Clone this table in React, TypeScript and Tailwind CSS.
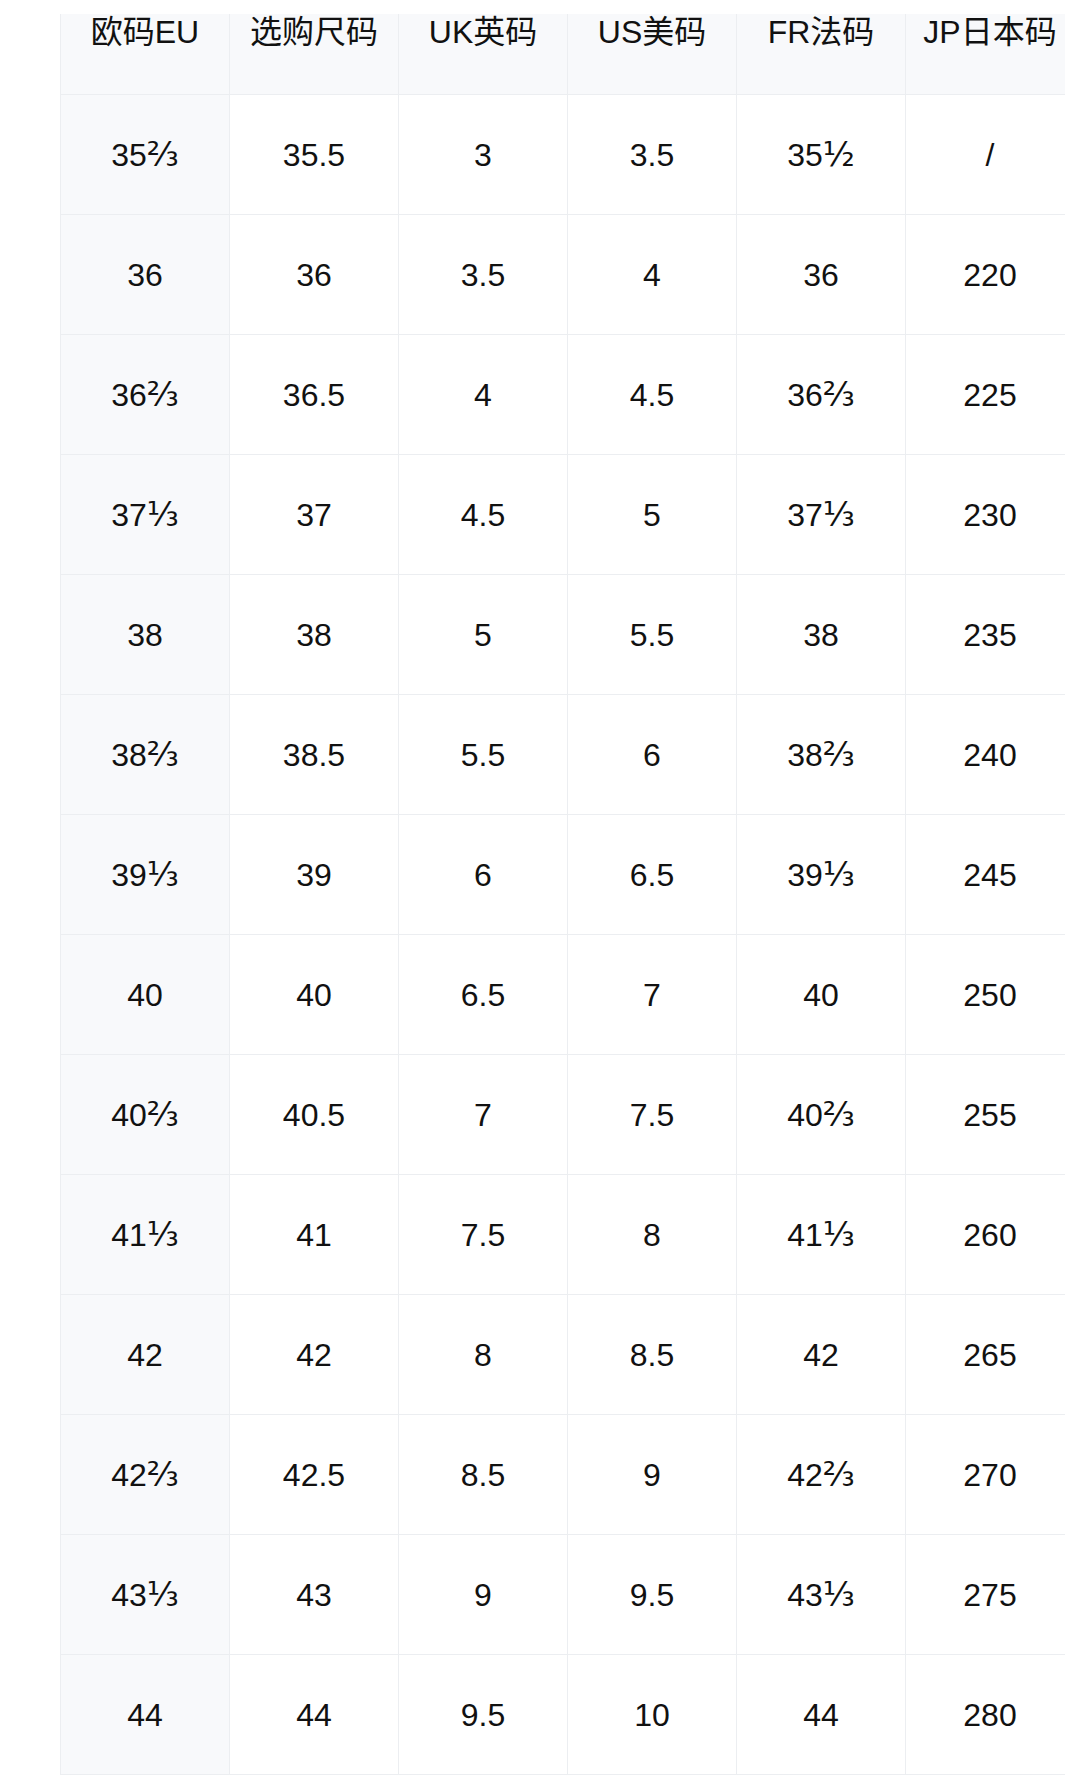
import React from 'react';

const HEADERS = ['欧码EU', '选购尺码', 'UK英码', 'US美码', 'FR法码', 'JP日本码'];

const ROWS = [
  ['35⅔', '35.5', '3', '3.5', '35½', '/'],
  ['36', '36', '3.5', '4', '36', '220'],
  ['36⅔', '36.5', '4', '4.5', '36⅔', '225'],
  ['37⅓', '37', '4.5', '5', '37⅓', '230'],
  ['38', '38', '5', '5.5', '38', '235'],
  ['38⅔', '38.5', '5.5', '6', '38⅔', '240'],
  ['39⅓', '39', '6', '6.5', '39⅓', '245'],
  ['40', '40', '6.5', '7', '40', '250'],
  ['40⅔', '40.5', '7', '7.5', '40⅔', '255'],
  ['41⅓', '41', '7.5', '8', '41⅓', '260'],
  ['42', '42', '8', '8.5', '42', '265'],
  ['42⅔', '42.5', '8.5', '9', '42⅔', '270'],
  ['43⅓', '43', '9', '9.5', '43⅓', '275'],
  ['44', '44', '9.5', '10', '44', '280'],
];

// split a trailing vulgar fraction off so it can use a font with a fuller glyph
function Cell({ value }: { value: string }) {
  const last = value.slice(-1);
  if ('⅓⅔½'.includes(last)) {
    return (
      <span>
        {value.slice(0, -1)}
        <span className="font-['DejaVu_Sans'] text-[33px]">{last}</span>
      </span>
    );
  }
  return <span>{value}</span>;
}

export default function App() {
  return (
    <main
      className="min-h-screen w-[1065px] overflow-hidden bg-white pt-[14px] text-[#111111]"
      style={{ fontFamily: '"Liberation Sans", "Noto Sans CJK SC", sans-serif' }}
    >
      <div className="ml-[60px] w-[1015px] border-l border-[#eceef1]">
        <div className="grid grid-cols-[repeat(6,169px)] bg-[#f8f9fb]">
          {HEADERS.map((h) => (
            <div
              key={h}
              className="flex h-[81px] justify-center border-r border-b border-[#eceef1] pt-[2px] text-[32px] leading-[32px]"
            >
              {h}
            </div>
          ))}
        </div>
        {ROWS.map((row, i) => (
          <div key={i} className="grid grid-cols-[repeat(6,169px)]">
            {row.map((cell, j) => (
              <div
                key={j}
                className={`flex h-[120px] items-center justify-center border-r border-b border-[#eceef1] text-[32px] ${
                  j === 0 ? 'bg-[#f8f9fb]' : 'bg-white'
                }`}
              >
                <Cell value={cell} />
              </div>
            ))}
          </div>
        ))}
      </div>
    </main>
  );
}
